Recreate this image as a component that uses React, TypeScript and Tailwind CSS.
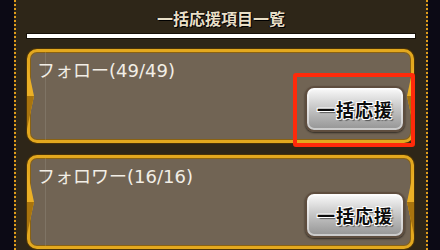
import React from "react";

interface Item {
    label: string;
    highlight?: boolean;
}

const items: Item[] = [
    { label: "フォロー(49/49)", highlight: true },
    { label: "フォロワー(16/16)" },
];

const jp = { fontFamily: '"Noto Sans CJK JP", "Noto Sans", sans-serif' };
// latin glyphs in the reference are wide, DejaVu gets close
const label = { fontFamily: '"DejaVu Sans", "Noto Sans CJK JP", sans-serif' };

function BulkButton() {
    return (
        <button
            type="button"
            className="flex h-[46px] w-[100px] items-center justify-center rounded-[9px] border-2 border-[#5e4d3e] bg-gradient-to-b from-[#fbfbfb] via-[#c4c4c4] to-[#949494] shadow-[inset_0_0_0_2px_rgba(255,255,255,0.5),0_1px_2px_rgba(0,0,0,0.6)]"
        >
            <span
                className="text-[18px] font-bold tracking-[1px] text-[#0c0c0c]"
                style={{ ...jp, textShadow: "1px 1px 0 #fff, -1px -1px 0 #fff, 1px -1px 0 #fff, -1px 1px 0 #fff, 2px 2px 1px rgba(0,0,0,0.5)" }}
            >
                一括応援
            </span>
        </button>
    );
}

function Card({ item }: { item: Item }) {
    return (
        <div className="relative h-[94px] rounded-[10px] border-[3px] border-[#e3a81e] bg-[#716454] shadow-[inset_0_0_0_1px_#8a6212,0_0_0_1px_#4a3308]">
            {/* side ornaments */}
            <svg className="absolute left-[-3px] top-[-3px] h-[94px] w-[8px]" viewBox="0 0 8 94" preserveAspectRatio="none">
                <polygon points="0,14 7,47 0,80" fill="#ebb026" />
                <polygon points="0,47 7,47 0,80" fill="#a8740e" />
            </svg>
            <svg className="absolute right-[-3px] top-[-3px] h-[94px] w-[8px]" viewBox="0 0 8 94" preserveAspectRatio="none">
                <polygon points="8,14 1,47 8,80" fill="#ebb026" />
                <polygon points="8,47 1,47 8,80" fill="#a8740e" />
            </svg>
            <div className="absolute bottom-0 left-[15px] top-0 w-px bg-white/10" />

            <div className="relative flex h-full flex-col pl-[7px] pr-[6px] pt-[7px]">
                <span className="text-[18px] leading-[24px] text-[#f2eee6]" style={label}>
                    {item.label}
                </span>
                <div className="mt-[3px] flex justify-end">
                    <BulkButton />
                </div>
            </div>

            {item.highlight && (
                <div className="absolute left-[263px] top-[21px] h-[74px] w-[122px] rounded-[3px] border-4 border-[#ff2a0a]" />
            )}
        </div>
    );
}

export default function App() {
    return (
        <div className="flex h-[250px] w-[440px] overflow-hidden bg-[#0c0a15]">
            <div className="ml-[14px] flex w-[414px] flex-col border-x-2 border-dotted border-[#e09d1c] bg-[#2e2618]">
                <div
                    className="flex h-[33px] items-center justify-center pt-[2px] text-[16px] font-bold text-[#e9dfc7]"
                    style={{ ...jp, textShadow: "1px 1px 0 #000, -1px 0 0 #000" }}
                >
                    一括応援項目一覧
                </div>
                <div className="mx-[10px] h-[6px] border border-[#151008] bg-white" />
                <div className="flex flex-col gap-[12px] pl-[11px] pr-[12px] pt-[10px]">
                    {items.map(item => (
                        <Card key={item.label} item={item} />
                    ))}
                </div>
            </div>
        </div>
    );
}
